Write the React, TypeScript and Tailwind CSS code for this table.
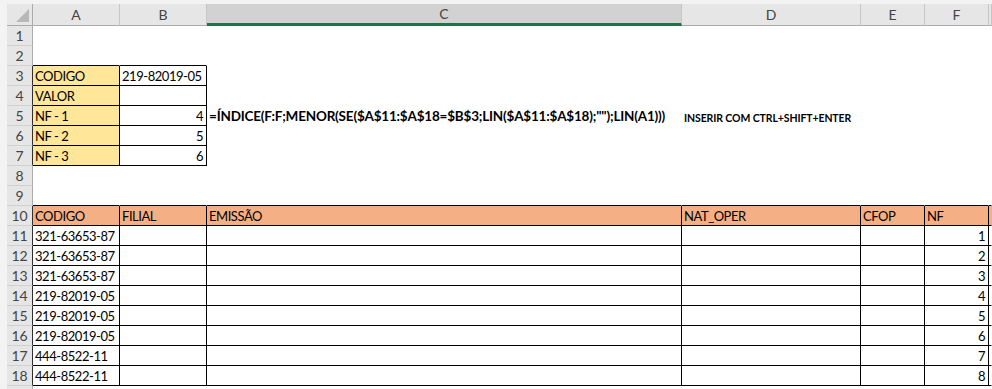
import React from "react";

type Cell = {
  t?: string;
  right?: boolean;
  bold?: boolean;
  small?: boolean;
  fill?: "y" | "o";
  br?: boolean;
  bb?: boolean;
};

const WIDTHS = [
  "w-[87px] shrink-0",
  "w-[87px] shrink-0",
  "w-[475px] shrink-0",
  "w-[179px] shrink-0",
  "w-[64px] shrink-0",
  "w-[64px] shrink-0",
  "flex-1 min-w-0",
];

const LETTERS = ["A", "B", "C", "D", "E", "F", "G"];

const FORMULA =
  '=ÍNDICE(F:F;MENOR(SE($A$11:$A$18=$B$3;LIN($A$11:$A$18);"");LIN(A1)))';

const codes = [
  "321-63653-87",
  "321-63653-87",
  "321-63653-87",
  "219-82019-05",
  "219-82019-05",
  "219-82019-05",
  "444-8522-11",
  "444-8522-11",
];

function buildRows(): { cells: Cell[]; edge: boolean }[] {
  const rows: { cells: Cell[]; edge: boolean }[] = [];
  for (let r = 1; r <= 19; r++) {
    const cells: Cell[] = Array.from({ length: 7 }, () => ({}));
    let edge = false;
    if (r === 2) {
      cells[0].bb = true;
      cells[1].bb = true;
    }
    if (r >= 3 && r <= 7) {
      edge = true;
      cells[0] = { ...cells[0], br: true, bb: true, fill: "y" };
      cells[1] = { ...cells[1], br: true, bb: true };
    }
    if (r === 3) {
      cells[0].t = "CODIGO";
      cells[1].t = "219-82019-05";
    }
    if (r === 4) cells[0].t = "VALOR";
    if (r >= 5 && r <= 7) {
      cells[0].t = `NF - ${r - 4}`;
      cells[1].t = String(r - 1);
      cells[1].right = true;
    }
    if (r === 5) {
      cells[2] = { t: FORMULA, bold: true };
      cells[3] = { t: "INSERIR COM CTRL+SHIFT+ENTER", bold: true, small: true };
    }
    if (r === 9) {
      for (let c = 0; c < 7; c++) cells[c].bb = true;
    }
    if (r >= 10 && r <= 18) {
      edge = true;
      for (let c = 0; c < 6; c++) {
        cells[c].br = true;
        cells[c].bb = true;
      }
      cells[6].bb = true;
    }
    if (r === 10) {
      const heads = ["CODIGO", "FILIAL", "EMISSÃO", "NAT_OPER", "CFOP", "NF", ""];
      heads.forEach((h, c) => {
        cells[c].t = h;
        cells[c].fill = "o";
      });
    }
    if (r >= 11 && r <= 18) {
      cells[0].t = codes[r - 11];
      cells[5].t = String(r - 10);
      cells[5].right = true;
    }
    rows.push({ cells, edge });
  }
  return rows;
}

function SheetCell({ cell, idx }: { cell: Cell; idx: number }) {
  const fill =
    cell.fill === "y"
      ? "bg-[#ffe699]"
      : cell.fill === "o"
        ? "bg-[#f4b084]"
        : "bg-white";
  const br = cell.br ? "border-r-black" : "border-r-transparent";
  const bb = cell.bb ? "border-b-black" : "border-b-transparent";
  const align = cell.right ? "justify-end pr-[3px]" : "justify-start pl-[2px]";
  const text = cell.small
    ? "text-[10.5px] font-bold tracking-[-0.1px] pt-[4px]"
    : cell.bold
      ? "text-[13.5px] font-bold tracking-[-0.2px] pt-[1px]"
      : "text-[13px] tracking-[-0.45px] pt-[1px]";
  return (
    <div
      className={`${WIDTHS[idx]} h-[20px] border-r border-b ${br} ${bb} ${fill} flex items-center ${align} relative overflow-visible`}
    >
      {cell.t ? (
        <span className={`whitespace-nowrap leading-[18px] text-black ${text}`}>
          {cell.t}
        </span>
      ) : null}
    </div>
  );
}

export default function App() {
  const rows = buildRows();
  return (
    <div className="w-[992px] h-[389px] overflow-hidden bg-[#f3f3f3] pt-[4px] pl-[7px] [font-family:Lato,'Liberation_Sans',sans-serif]">
      {/* column headings */}
      <div className="flex h-[22px]">
        <div className="w-[26px] shrink-0 h-[22px] bg-[#e6e6e6] border-r border-b border-r-[#ababab] border-b-[#ababab] relative">
          <svg
            className="absolute right-[3px] bottom-[3px]"
            width="13"
            height="13"
            viewBox="0 0 13 13"
          >
            <polygon points="13,0 13,13 0,13" fill="#b8b8b8" />
          </svg>
        </div>
        {LETTERS.map((l, i) =>
          i === 2 ? (
            <div
              key={l}
              className={`${WIDTHS[i]} h-[22px] bg-[#d2d2d2] border-r border-r-[#c6c6c6] border-b-[3px] border-b-[#217346] flex items-center justify-center text-[14px] leading-[18px] text-[#444] pt-[1px]`}
            >
              {l}
            </div>
          ) : (
            <div
              key={l}
              className={`${WIDTHS[i]} h-[22px] bg-[#e6e6e6] border-r border-r-[#c6c6c6] border-b border-b-[#ababab] flex items-center justify-center text-[14px] leading-[18px] text-[#444]`}
            >
              {i === 6 ? "" : l}
            </div>
          )
        )}
      </div>
      {/* rows */}
      {rows.map((row, ri) => (
        <div key={ri} className="flex h-[20px]">
          <div
            className={`w-[26px] shrink-0 h-[20px] bg-[#e6e6e6] border-r border-b border-b-[#d0d0d0] ${row.edge ? "border-r-[#303030]" : "border-r-[#ababab]"} flex items-center justify-center text-[14px] leading-[18px] text-[#444] pt-[1px]`}
          >
            {ri < 18 ? ri + 1 : ""}
          </div>
          {row.cells.map((c, ci) => (
            <SheetCell key={ci} cell={c} idx={ci} />
          ))}
        </div>
      ))}
    </div>
  );
}
